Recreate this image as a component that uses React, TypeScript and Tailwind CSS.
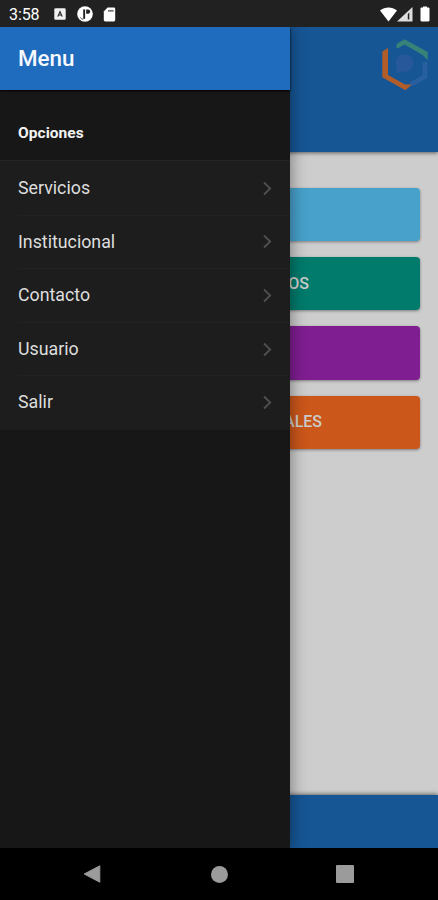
const OPTIONS = ['Servicios', 'Institucional', 'Contacto', 'Usuario', 'Salir']

const TILES = [
  { color: 'bg-[#47a1cb]', label: '', pad: '' },
  { color: 'bg-[#007b6c]', label: 'OS', pad: 'pr-[111px]' },
  { color: 'bg-[#7f1e91]', label: '', pad: '' },
  { color: 'bg-[#cb571a]', label: 'ALES', pad: 'pr-[98px]' },
]

function StatusBar() {
  return (
    <div className="flex h-[27px] shrink-0 items-center bg-[#212121] pl-[9px] pr-[8px] pt-px text-white">
      <span className="w-[45px] pt-[2px] text-[16px] leading-none tracking-[-0.1px]">3:58</span>
      <svg width="12" height="12" viewBox="0 0 12 12" className="shrink-0">
        <rect x="0.3" y="0.3" width="11.4" height="11.4" rx="1.3" fill="#f1f1f1" />
        <path d="M3.8 8.6 6 3.6 8.2 8.6M4.6 7h2.8" fill="none" stroke="#212121" strokeWidth="1.1" />
      </svg>
      <svg width="16" height="16" viewBox="0 0 16 16" className="ml-[11px] shrink-0">
        <circle cx="8" cy="8" r="7.8" fill="#fff" />
        <path d="M6.2 3.4h1.9v9.4H6.2z" fill="#212121" />
        <path d="M9.2 3.4H11a2.2 2.2 0 0 1 0 4.4H9.2z" fill="#212121" />
        <path d="M3.2 11.5c.8 1 1.8 1.6 3 1.9" fill="none" stroke="#212121" strokeWidth="0.8" />
      </svg>
      <svg width="13" height="15" viewBox="0 0 13 15" className="ml-[10px] shrink-0">
        <path d="M4.6 .6h6.2c.8 0 1.4.6 1.4 1.4v11c0 .8-.6 1.4-1.4 1.4H2.2c-.8 0-1.4-.6-1.4-1.4V4.6z" fill="#fff" />
        <path d="M5 3.8h5.6" stroke="#777" strokeWidth="1.8" />
      </svg>
      <svg width="17" height="15" viewBox="0 0 17 15" className="ml-auto shrink-0">
        <path d="M0 3.6C5-.4 12-.4 17 3.6L8.5 14.4z" fill="#fff" />
      </svg>
      <svg width="16" height="15" viewBox="0 0 16 15" className="shrink-0">
        <path d="M0 14.4 15.5 0v14.4z" fill="#dedede" />
        <path d="M10.8 7 12.3 5.5v7h-1.5z" fill="#212121" />
      </svg>
      <svg width="10" height="16" viewBox="0 0 10 16" className="ml-[7px] shrink-0">
        <path d="M3 .4h4v1.2h1.4c.6 0 1.1.5 1.1 1.1v11.6c0 .6-.5 1.1-1.1 1.1H1.6c-.6 0-1.1-.5-1.1-1.1V2.7c0-.6.5-1.1 1.1-1.1H3z" fill="#fff" />
      </svg>
    </div>
  )
}

function Logo() {
  return (
    <svg width="48" height="54" viewBox="0 0 48 54">
      <circle cx="23.5" cy="25" r="8.8" fill="#27599a" />
      <path d="M16 27v8l8-2z" fill="#27599a" />
      <path d="M44 24v14.5L30 46.5" fill="none" stroke="#28609f" strokeWidth="4.6" />
      <path d="M15.5 9.7V6L23.5 1.3 46.7 14v8.2L42 17.3 23.5 6.4 17 10.2z" fill="#388379" />
      <path d="M1.3 13.4 7 10v27l17 9.6h7l-6.6 5.6L1.3 39.2z" fill="#b15d29" />
    </svg>
  )
}

function HomePage() {
  return (
    <div className="flex h-full flex-col bg-[#cdcdcd]">
      <header className="z-10 flex h-[125px] shrink-0 justify-end bg-[#165695] pr-[9px] pt-[11px] shadow-[0_1px_4px_rgba(0,0,0,0.55)]">
        <Logo />
      </header>
      <main className="flex grow flex-col gap-4 px-[18px] pt-9">
        {TILES.map((tile) => (
          <div
            key={tile.color}
            className={`flex h-[53.2px] items-center justify-end rounded-[4px] text-base font-medium text-[#cdcdcd] shadow-[0_1px_3px_rgba(0,0,0,0.4)] ${tile.color} ${tile.pad}`}
          >
            {tile.label}
          </div>
        ))}
      </main>
      <footer className="h-[53px] shrink-0 bg-[#165695] shadow-[0_-1px_4px_rgba(0,0,0,0.5)]" />
    </div>
  )
}

function Drawer() {
  return (
    <aside className="absolute inset-y-0 left-0 z-20 w-[290px] bg-[#171717] shadow-[0_0_16px_rgba(0,0,0,0.45)]">
      <div className="flex h-[63px] items-center bg-[#1f6bbd] pl-[18px] text-[22.4px] font-medium text-[#f6f8fc] shadow-[0_1px_2px_#000]">
        Menu
      </div>
      <div className="flex h-[71px] items-center border-b border-[#242424] pl-[18px] pt-[18px] text-[15.5px] font-bold tracking-[0.05px] text-[#f2f2f2]">
        Opciones
      </div>
      <ul className="bg-[#1d1d1d] pl-[18px] pt-px">
        {OPTIONS.map((option) => (
          <li
            key={option}
            className="flex h-[53.6px] items-center justify-between border-b border-[#222222] pr-[17px] text-[17.8px] text-[#dedede] last:border-transparent"
          >
            {option}
            <svg width="11" height="15" viewBox="0 0 11 15" fill="none" stroke="#505050" strokeWidth="1.8">
              <path d="m2 1.5 6.2 6L2 13.5" />
            </svg>
          </li>
        ))}
      </ul>
    </aside>
  )
}

function NavigationBar() {
  return (
    <nav className="flex h-[52px] shrink-0 items-center justify-between bg-black pl-[83px] pr-[84px]">
      <svg width="18" height="18" viewBox="0 0 18 18">
        <path d="M1.2 9 16.8.8v16.4z" fill="#9b9b9b" stroke="#9b9b9b" strokeLinejoin="round" />
      </svg>
      <div className="ml-px size-[17px] rounded-full bg-[#9b9b9b]" />
      <div className="size-[18px] rounded-[1px] bg-[#9b9b9b]" />
    </nav>
  )
}

export default function App() {
  return (
    <div className="flex h-[900px] w-[438px] flex-col overflow-hidden bg-black font-[Roboto,sans-serif]">
      <StatusBar />
      <div className="relative h-[821px] shrink-0 overflow-hidden">
        <HomePage />
        <Drawer />
      </div>
      <NavigationBar />
    </div>
  )
}
